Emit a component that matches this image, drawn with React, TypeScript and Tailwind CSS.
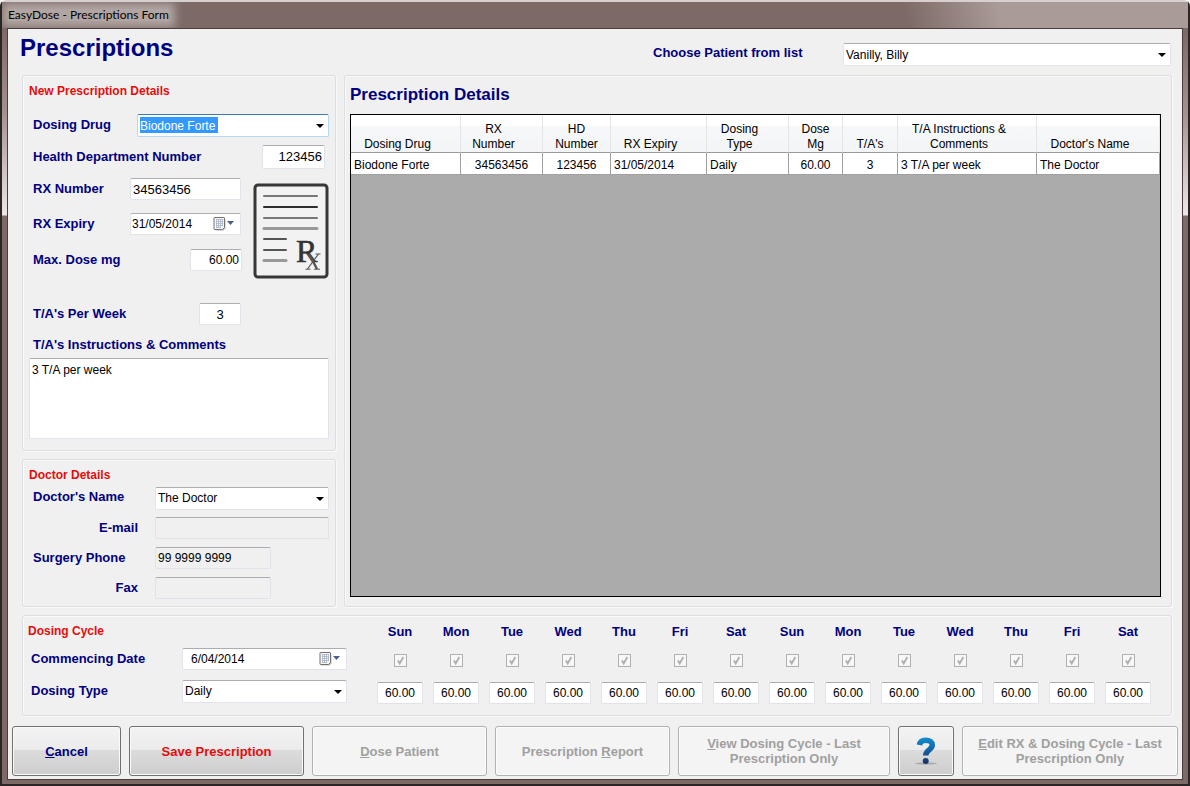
import type { ReactNode } from "react";

const label = "text-[13px] leading-4 font-bold text-[#00007f] whitespace-nowrap shrink-0";
const legend = "text-xs leading-4 font-bold text-[#e60c0c]";
const edge = "border border-[#e2e3ea] border-t-[#abadb3] rounded-[2px]";
const box = `${edge} bg-white text-black shrink-0 outline-none`;
const panel =
  "border border-[#d9dee3] rounded-[3px] shadow-[inset_1px_1px_0_#fafafa,1px_1px_0_#fafafa]";

function Select({ id, value, className, active }: { id: string; value: string; className: string; active?: boolean }) {
  return (
    <div className={`relative ${className}`}>
      <select
        id={id}
        defaultValue={value}
        className={
          active
            ? "block h-[23px] w-full appearance-none rounded-[2px] border border-[#b7d9ed] border-t-[#3d7bad] bg-white bg-[linear-gradient(#3399ff,#3399ff)] bg-[length:78px_16px] bg-[position:2px_2px] bg-no-repeat pl-[2px] text-xs text-white outline-none"
            : `block h-[23px] w-full appearance-none pl-[2px] text-xs ${box}`
        }
      >
        <option className="text-black">{value}</option>
      </select>
      <svg className="pointer-events-none absolute top-[10px] right-[5px]" width="8" height="4" viewBox="0 0 8 4">
        <path d="M0 0h8L4 4z" fill="#000" />
      </svg>
    </div>
  );
}

function DateField({ id, value, className, inputClass }: { id: string; value: string; className: string; inputClass: string }) {
  return (
    <div className={`flex h-[22px] items-center pr-[5px] ${box} ${className}`}>
      <input id={id} defaultValue={value} className={`h-full w-0 min-w-0 flex-1 bg-transparent text-xs outline-none ${inputClass}`} />
      <button type="button" aria-label="Open calendar" className="shrink-0">
        <svg width="22" height="14" viewBox="0 0 22 14" className="block">
          <path d="M2.500 2.500h10v9l-2 2h-8z" fill="#bbb" />
          <path d="M1.500 .5h9.500a.5.5 0 0 1 .5.5v9.500l-2 2h-8a.5.5 0 0 1-.5-.5v-11a.5.5 0 0 1 .5-.5z" fill="#f4f6fa" stroke="#77706e" />
          <path d="M3 2.500h7M3 4.500h7M3 6.500h7M3 8.500h7M3 10.500h5M3.500 2v9M5.500 2v9M7.500 2v9M9.500 2v7" stroke="#a3aec2" strokeWidth=".7" />
          <path d="M14 4h7l-3.500 4z" fill="#46608a" />
        </svg>
      </button>
    </div>
  );
}

function RxSheet() {
  return (
    <svg width="76" height="96" viewBox="0 0 76 96" className="shrink-0" aria-hidden="true">
      <rect x="2" y="2" width="72" height="92" rx="3" fill="#f2f2f2" stroke="#373737" strokeWidth="3" />
      <g strokeWidth="2" strokeLinecap="round">
        <path d="M11 13h53" stroke="#777" />
        <path d="M11 24h53" stroke="#2d2d2d" />
        <path d="M11 35h53" stroke="#777" />
        <path d="M11 45.500h53" stroke="#999" strokeWidth="3" />
        <path d="M11 56h22" stroke="#555" />
        <path d="M11 67h22" stroke="#555" />
        <path d="M11 77.500h22" stroke="#999" strokeWidth="3" />
      </g>
      <text x="43" y="79" fontFamily="Liberation Serif, serif" fontSize="32" fill="#333" stroke="#333" strokeWidth=".6">R</text>
      <g fill="none" stroke="#555">
        <path d="M56 71l8 15" strokeWidth="2.400" />
        <path d="M65.500 71l-11 15" strokeWidth="1.200" />
        <path d="M62.500 71h5M52.500 86.200h5M61 86.200h6" strokeWidth="1" />
      </g>
    </svg>
  );
}

function HelpIcon() {
  return (
    <svg width="26" height="30" viewBox="0 0 26 30" aria-hidden="true">
      <defs>
        <linearGradient id="mark" x1="0" y1="0" x2="0" y2="30" gradientUnits="userSpaceOnUse">
          <stop offset="0" stopColor="#0f93d2" />
          <stop offset=".55" stopColor="#14599f" />
          <stop offset="1" stopColor="#17265c" />
        </linearGradient>
      </defs>
      <ellipse cx="13" cy="27.500" rx="11" ry="1.200" fill="#aaa" />
      <path d="M6.500 9C7 5.500 9.500 4.200 12.700 4.200c4 0 6.600 1.800 6.600 4.900 0 4.700-6.600 4.900-6.600 10.400" fill="none" stroke="url(#mark)" strokeWidth="5.500" />
      <circle cx="12.700" cy="25" r="3" fill="url(#mark)" />
    </svg>
  );
}

type Column = { title: ReactNode; cell: string; width: string; sort: boolean; center: boolean };
const columns: Column[] = [
  { title: "Dosing Drug", cell: "Biodone Forte", width: "w-[110px]", sort: true, center: false },
  { title: <>RX<br />Number</>, cell: "34563456", width: "w-[82px]", sort: true, center: true },
  { title: <>HD<br />Number</>, cell: "123456", width: "w-[68px]", sort: false, center: true },
  { title: "RX Expiry", cell: "31/05/2014", width: "w-[96px]", sort: true, center: false },
  { title: <>Dosing<br />Type</>, cell: "Daily", width: "w-[82px]", sort: true, center: false },
  { title: <>Dose<br />Mg</>, cell: "60.00", width: "w-[54px]", sort: false, center: true },
  { title: "T/A's", cell: "3", width: "w-[55px]", sort: false, center: true },
  { title: <>T/A Instructions &amp;<br />Comments</>, cell: "3 T/A per week", width: "w-[139px]", sort: true, center: false },
  { title: "Doctor's Name", cell: "The Doctor", width: "", sort: true, center: false },
];

const week = ["Sun", "Mon", "Tue", "Wed", "Thu", "Fri", "Sat"];
const days = [...week, ...week];

function Day({ name, index }: { name: string; index: number }) {
  return (
    <div className="flex flex-col items-center">
      <label htmlFor={`day-${index}`} className={label}>{name}</label>
      <span className="mt-[14px] grid size-[13px]">
        <input
          id={`day-${index}`}
          type="checkbox"
          defaultChecked
          disabled
          className="col-start-1 row-start-1 size-[13px] appearance-none border border-[#b1b1b1] bg-[#f7f7f7]"
        />
        <svg viewBox="0 0 13 13" className="pointer-events-none col-start-1 row-start-1 size-[13px]">
          <path d="M4 6.500 5.700 9.500 9.300 3.200" fill="none" stroke="#a9a9b0" strokeWidth="1.700" />
        </svg>
      </span>
      <input aria-label={`${name} dose`} defaultValue="60.00" className={`mt-[15px] h-[22px] w-[46px] text-center text-xs ${box}`} />
    </div>
  );
}

function Action({ children, tone, disabled, name }: { children: ReactNode; tone?: string; disabled?: boolean; name?: string }) {
  return (
    <button
      type="button"
      disabled={disabled}
      aria-label={name}
      className={`flex h-[50px] items-center justify-center rounded-[3px] border px-2 text-center text-[13px] leading-[15px] font-bold ${
        disabled
          ? "border-[#adb2b5] bg-[#f4f4f4] text-[#a0a0a0] shadow-[inset_0_0_0_1px_#fcfcfc]"
          : `border-[#707070] bg-[linear-gradient(#f3f3f3,#ebebeb_48%,#dcdcdc_48%,#cdcdcd)] shadow-[inset_0_0_0_1px_#fafafa] ${tone ?? ""}`
      }`}
    >
      <span>{children}</span>
    </button>
  );
}

export default function App() {
  return (
    <div className="flex min-h-screen flex-col rounded-t-md border-2 border-t-[#d8d0ce] border-r-[#2b2525] border-b-[#2b2525] border-l-[#2b2525] bg-[linear-gradient(#7d6a66_28px,#a3918e_110px,#e6dcdc_200px,#efe6e6_213px,#7d6a66_214px)] px-[5px] pb-1 font-['Liberation_Sans',Arial,sans-serif]">
      <header className="-mx-[5px] flex h-[26px] items-center overflow-hidden bg-[linear-gradient(75deg,#7d6a66_76%,#a99b98_84%,#a99b98)]">
        <h1 className="ml-[6px] bg-[#b0a5a2] font-['Lato','Open_Sans',sans-serif] text-xs leading-3 text-black shadow-[0_0_8px_6px_#b0a5a2]">
          EasyDose - Prescriptions Form
        </h1>
      </header>

      <main className="flex flex-1 flex-col border border-[#4b3d3b] bg-[#f0f0f0] pb-[3px]">
        <div className="flex h-[46px] items-center justify-between pr-[11px] pl-3">
          <h2 className="pb-[9px] text-2xl leading-7 font-bold text-[#00007f]">Prescriptions</h2>
          <div className="flex items-center pt-[5px]">
            <label htmlFor="patient" className={`w-[190px] pb-[3px] ${label}`}>Choose Patient from list</label>
            <Select id="patient" value="Vanilly, Billy" className="w-[328px]" />
          </div>
        </div>

        <div className="flex flex-1 gap-2 pr-[10px] pl-[14px]">
          <div className="flex w-[314px] shrink-0 flex-col gap-2">
            <section className={`flex-1 px-[6px] pb-[11px] ${panel}`}>
              <h3 className={`mb-[11px] pt-[7px] ${legend}`}>New Prescription Details</h3>
              <div className="flex h-[31px] items-center pl-1">
                <label htmlFor="drug" className={`w-[104px] pb-[2px] ${label}`}>Dosing Drug</label>
                <Select id="drug" value="Biodone Forte" className="flex-1" active />
              </div>
              <div className="flex h-[31px] items-center pl-1">
                <label htmlFor="hd" className={`w-[229px] ${label}`}>Health Department Number</label>
                <input id="hd" defaultValue="123456" className={`h-6 w-[63px] pr-[2px] text-right text-[13px] ${box}`} />
              </div>
              <div className="flex items-end justify-between pl-1">
                <div>
                  <div className="flex h-[34px] items-center">
                    <label htmlFor="rx" className={`w-[97px] ${label}`}>RX Number</label>
                    <input id="rx" defaultValue="34563456" className={`h-[22px] w-[111px] pl-[2px] text-[13px] ${box}`} />
                  </div>
                  <div className="flex h-[35px] items-center">
                    <label htmlFor="expiry" className={`w-[97px] ${label}`}>RX Expiry</label>
                    <DateField id="expiry" value="31/05/2014" className="w-[111px]" inputClass="pl-px" />
                  </div>
                  <div className="flex h-[38px] items-center">
                    <label htmlFor="max" className={`w-[157px] ${label}`}>Max. Dose mg</label>
                    <input id="max" defaultValue="60.00" className={`h-[22px] w-[52px] pr-[2px] text-right text-xs ${box}`} />
                  </div>
                </div>
                <RxSheet />
              </div>
              <div className="mt-[17px] flex h-9 items-center pl-1">
                <label htmlFor="tas" className={`w-[166px] ${label}`}>T/A's Per Week</label>
                <input id="tas" defaultValue="3" className={`h-[22px] w-[42px] text-center text-[13px] ${box}`} />
              </div>
              <label htmlFor="notes" className={`flex h-[26px] items-center pl-1 ${label}`}>T/A's Instructions &amp; Comments</label>
              <textarea id="notes" defaultValue="3 T/A per week" className={`block h-[81px] w-full resize-none px-[2px] py-[3px] text-xs leading-4 ${box}`} />
            </section>

            <section className={`px-[6px] pb-[3px] ${panel}`}>
              <h3 className={`pt-[7px] ${legend}`}>Doctor Details</h3>
              <div className="flex h-[30px] items-center pl-1">
                <label htmlFor="doctor" className={`w-[122px] pb-[2px] ${label}`}>Doctor's Name</label>
                <Select id="doctor" value="The Doctor" className="flex-1" />
              </div>
              <div className="flex h-[30px] items-center pl-1">
                <label htmlFor="email" className={`w-[122px] pr-[17px] text-right ${label}`}>E-mail</label>
                <input id="email" readOnly className={`h-[22px] w-0 min-w-0 flex-1 outline-none ${edge}`} />
              </div>
              <div className="flex h-[30px] items-center pl-1">
                <label htmlFor="phone" className={`w-[122px] ${label}`}>Surgery Phone</label>
                <input id="phone" readOnly value="99 9999 9999" className={`h-[22px] w-[116px] pl-[2px] text-xs outline-none ${edge}`} />
              </div>
              <div className="flex h-[30px] items-center pl-1">
                <label htmlFor="fax" className={`w-[122px] pr-[17px] text-right ${label}`}>Fax</label>
                <input id="fax" readOnly className={`h-[22px] w-[116px] outline-none ${edge}`} />
              </div>
            </section>
          </div>

          <section className={`flex min-w-0 flex-1 flex-col px-[5px] pb-[9px] ${panel}`}>
            <h3 className="py-2 text-[17px] leading-[22px] font-bold text-[#00007f]">Prescription Details</h3>
            <div className="mr-[5px] flex-1 border border-black bg-[#ababab]">
              <table className="w-full table-fixed border-separate border-spacing-0 text-xs">
                <thead>
                  <tr>
                    {columns.map((c, i) => (
                      <th
                        key={i}
                        className={`h-[38px] border-r border-b border-r-[#e3e6e9] border-b-[#9a9a9a] bg-[linear-gradient(#fff_30%,#f6f8fa_30%,#f2f4f6)] p-0 text-center align-bottom leading-[15px] font-normal ${c.width} ${c.sort ? "pr-4" : ""}`}
                      >
                        {c.title}
                      </th>
                    ))}
                  </tr>
                </thead>
                <tbody>
                  <tr>
                    {columns.map((c, i) => (
                      <td key={i} className={`h-[22px] border-r border-b border-[#a0a0a0] bg-white p-0 pt-[2px] whitespace-nowrap ${c.center ? "text-center" : "pl-[3px]"}`}>
                        {c.cell}
                      </td>
                    ))}
                  </tr>
                </tbody>
              </table>
            </div>
          </section>
        </div>

        <section className={`mt-2 mr-[10px] ml-[14px] flex h-[101px] ${panel}`}>
          <div className="w-[325px] shrink-0 pl-[5px]">
            <h3 className={`mb-[7px] pt-[7px] ${legend}`}>Dosing Cycle</h3>
            <div className="flex h-[26px] items-center pl-[3px]">
              <label htmlFor="start" className={`w-[151px] ${label}`}>Commencing Date</label>
              <DateField id="start" value="6/04/2014" className="w-[165px]" inputClass="pl-2" />
            </div>
            <div className="mt-[6px] flex h-[26px] items-center pl-[3px]">
              <label htmlFor="type" className={`w-[151px] ${label}`}>Dosing Type</label>
              <Select id="type" value="Daily" className="w-[165px]" />
            </div>
          </div>
          <div className="mr-[15px] ml-6 grid flex-1 grid-cols-14 pt-2">
            {days.map((d, i) => (
              <Day key={i} name={d} index={i} />
            ))}
          </div>
        </section>

        <footer className="mt-[10px] grid grid-cols-[109fr_175fr_175fr_175fr_212fr_56fr_216fr] gap-2 px-1">
          <Action tone="text-[#00007f]"><u>C</u>ancel</Action>
          <Action tone="text-[#e60c0c]">Save Prescription</Action>
          <Action disabled><u>D</u>ose Patient</Action>
          <Action disabled>Prescription <u>R</u>eport</Action>
          <Action disabled><u>V</u>iew Dosing Cycle - Last<br />Prescription Only</Action>
          <Action name="Help"><HelpIcon /></Action>
          <Action disabled><u>E</u>dit RX &amp; Dosing Cycle - Last<br />Prescription Only</Action>
        </footer>
      </main>
    </div>
  );
}
